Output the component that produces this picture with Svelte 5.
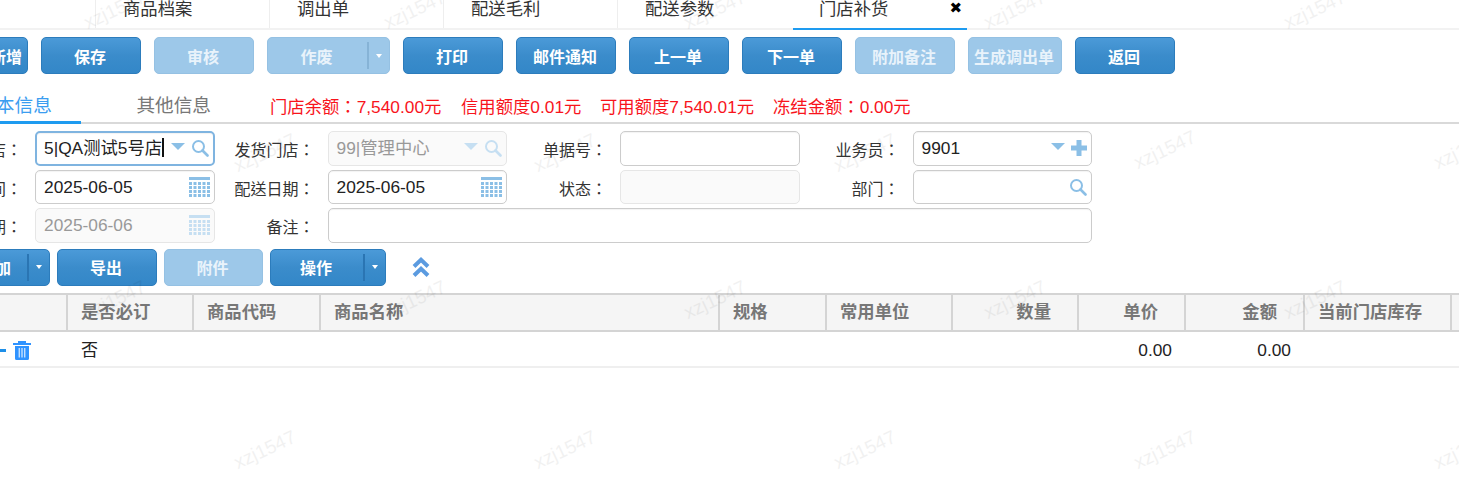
<script>
  const tabs = ['商品档案', '调出单', '配送毛利', '配送参数'];
  const actions = [
    { t: '新增', lead: true }, { t: '保存' }, { t: '审核', off: true }, { t: '作废', off: true, split: true },
    { t: '打印' }, { t: '邮件通知' }, { t: '上一单' }, { t: '下一单' },
    { t: '附加备注', off: true }, { t: '生成调出单', off: true, narrow: true }, { t: '返回' }
  ];
  const cols = [
    { t: '', w: 68 }, { t: '是否必订', w: 126 }, { t: '商品代码', w: 127 }, { t: '商品名称', w: 399 },
    { t: '规格', w: 107 }, { t: '常用单位', w: 126 }, { t: '数量', w: 126, r: true }, { t: '单价', w: 107, r: true },
    { t: '金额', w: 119, r: true }, { t: '当前门店库存', w: 147 }, { t: '', w: 7 }
  ];
  const template = cols.map((c) => c.w + 'px').join(' ');
  const marks = [
    [115, 10], [415, 10], [715, 10], [1015, 10], [1315, 10],
    [265, 153], [565, 153], [865, 153], [1165, 150], [1465, 150],
    [115, 300], [415, 300], [715, 300], [1015, 300], [1315, 300],
    [265, 450], [565, 450], [865, 450], [1165, 450], [1465, 450]
  ];
</script>

{#snippet search(cls = '')}
  <svg class="ico search {cls}" viewBox="0 0 18 18" width="18" height="18"><circle cx="7.5" cy="7.5" r="5.5" fill="none" stroke="currentColor" stroke-width="2"/><path d="M11.5 11.5 16.5 16.5" stroke="currentColor" stroke-width="2.6" stroke-linecap="round"/></svg>
{/snippet}
{#snippet caret()}
  <svg class="ico caret" viewBox="0 0 14 7" width="14" height="7"><path d="M0 0H14L7 7Z" fill="currentColor"/></svg>
{/snippet}
{#snippet calendar()}
  <svg class="ico" viewBox="0 0 21 20" width="21" height="20">
    <rect x="0" y="0" width="21" height="3" fill="currentColor"/>
    {#each [5, 9, 13, 17] as y}
      {#each [0, 4.5, 9, 13.5, 18] as x}
        <rect {x} {y} width="3" height="3" fill="currentColor"/>
      {/each}
    {/each}
  </svg>
{/snippet}

<div class="page">
  <nav class="tabs">
    {#each tabs as t}
      <div class="tab">{t}</div>
    {/each}
    <div class="tab active">门店补货<span class="close">✖</span></div>
  </nav>

  <div class="toolbar">
    {#each actions as a}
      <button class="btn" class:off={a.off} class:split={a.split} class:narrow={a.narrow} class:lead={a.lead}>
        <span class="lbl">{a.t}</span>
        {#if a.split}<span class="drop"><i></i></span>{/if}
      </button>
    {/each}
  </div>

  <div class="subtabs">
    <div class="sub on">基本信息</div>
    <div class="sub">其他信息</div>
    <div class="money">
      <span class="m1">门店余额：7,540.00元</span>
      <span class="m2">信用额度0.01元</span>
      <span class="m3">可用额度7,540.01元</span>
      <span>冻结金额：0.00元</span>
    </div>
  </div>

  <div class="form">
    <label class="lab">收货门店：</label>
    <div class="field focus"><span class="val">5|QA测试5号店<b class="cursor"></b></span>{@render caret()}{@render search()}</div>
    <label class="lab">发货门店：</label>
    <div class="field dis"><span class="val">99|管理中心</span>{@render caret()}{@render search()}</div>
    <label class="lab">单据号：</label>
    <div class="field"></div>
    <label class="lab">业务员：</label>
    <div class="field"><span class="val">9901</span>{@render caret()}
      <svg class="ico" viewBox="0 0 16 16" width="16" height="16"><path d="M8 0V16M0 8H16" stroke="currentColor" stroke-width="5"/></svg>
    </div>

    <label class="lab">单据时间：</label>
    <div class="field"><span class="val">2025-06-05</span>{@render calendar()}</div>
    <label class="lab">配送日期：</label>
    <div class="field"><span class="val">2025-06-05</span>{@render calendar()}</div>
    <label class="lab">状态：</label>
    <div class="field dis"></div>
    <label class="lab">部门：</label>
    <div class="field"><span class="val"></span>{@render search()}</div>

    <label class="lab">到货日期：</label>
    <div class="field dis"><span class="val">2025-06-06</span>{@render calendar()}</div>
    <label class="lab">备注：</label>
    <div class="field wide"></div>
  </div>

  <div class="toolbar second">
    <button class="btn split first"><span class="lbl">添加</span><span class="drop"><i></i></span></button>
    <button class="btn"><span class="lbl">导出</span></button>
    <button class="btn off attach"><span class="lbl">附件</span></button>
    <button class="btn split ops"><span class="lbl">操作</span><span class="drop"><i></i></span></button>
    <svg class="chev" viewBox="0 0 18 21" width="18" height="21"><path d="M2 9.500 9 2.800 16 9.500M2 18.500 9 11.800 16 18.500" fill="none" stroke="#5b9be0" stroke-width="4"/></svg>
  </div>

  <div class="grid head" style="grid-template-columns:{template}">
    {#each cols as c}
      <div class="th" class:r={c.r}>{c.t}</div>
    {/each}
  </div>
  <div class="grid row" style="grid-template-columns:{template}">
    <div class="td opsCell">
      <i class="minus"></i>
      <svg viewBox="0 0 18 20" width="18" height="20"><path d="M0 3H18V5H0ZM5 1H13V3H5Z" fill="#2f93ff"/><path fill-rule="evenodd" d="M2 6H16V18.5Q16 20 14.500 20H3.500Q2 20 2 18.500ZM5.700 8V17.500H6.700V8ZM8.500 8V17.500H9.500V8ZM11.300 8V17.500H12.300V8Z" fill="#2f93ff"/></svg>
    </div>
    <div class="td">否</div>
    <div class="td"></div><div class="td"></div><div class="td"></div><div class="td"></div><div class="td"></div>
    <div class="td num">0.00</div>
    <div class="td num">0.00</div>
    <div class="td"></div><div class="td"></div>
  </div>

  {#each marks as [x, y]}
    <span class="mark" style="left:{x}px;top:{y}px">xzj1547</span>
  {/each}
</div>

<style>
  :global(body) { margin: 0; background: #fff; }
  .page {
    position: relative;
    width: 1459px;
    height: 501px;
    overflow: hidden;
    background: #fff;
    font-family: "Liberation Sans", "Noto Sans CJK SC", sans-serif;
    font-size: 17.33px;
    color: #222;
  }
  .tabs {
    display: flex;
    height: 28px;
    padding-left: 95px;
    border-bottom: 2px solid #f2f2f2;
  }
  .tab {
    box-sizing: border-box;
    width: 174px;
    height: 28px;
    padding-left: 27px;
    line-height: 19px;
    font-size: 17.33px;
    color: #333;
    border-left: 1px solid #eee;
    position: relative;
  }
  .tab.active {
    border-left: 0;
    border-bottom: 2px solid #1e9bf0;
    height: 30px;
    margin-left: 2px;
    padding-left: 26px;
  }
  .close {
    position: absolute;
    right: 5px;
    top: 0;
    font-size: 15px;
    line-height: 17px;
    color: #000;
    font-family: "DejaVu Sans", sans-serif;
  }
  .toolbar {
    display: flex;
    gap: 13px;
    margin-left: -14px;
    margin-top: 7px;
  }
  .btn {
    box-sizing: border-box;
    display: flex;
    align-items: center;
    justify-content: center;
    width: 100px;
    height: 37px;
    padding: 0 2px 0 0;
    border: 1px solid #2c7cbc;
    border-radius: 5px;
    background: linear-gradient(#4b9ad8, #3b8ccb 50%, #3387c8);
    color: #fff;
    font: bold 16px "Liberation Sans", "Noto Sans CJK SC", sans-serif;
    flex: none;
  }
  .btn.lead { width: 42px; }
  .btn.off { border-color: #95c1e3; background: #9dc8e9; color: #e9f3fb; }
  .btn.narrow { width: 94px; }
  .btn.split { width: 123px; padding-right: 0; }
  .btn.split .lbl { flex: 1; text-align: center; padding-right: 2px; }
  .drop {
    box-sizing: border-box;
    width: 22px;
    height: 27px;
    display: flex;
    align-items: center;
    justify-content: center;
    border-left: 2px solid #2a75b3;
  }
  .off .drop { border-left-color: #86b3d6; }
  .drop i {
    width: 0;
    height: 0;
    border: 3.5px solid transparent;
    border-top: 4px solid #fff;
    border-bottom: 0;
  }
  .subtabs {
    display: flex;
    align-items: flex-end;
    height: 47px;
    margin-top: 1px;
    margin-left: -56px;
    border-bottom: 2px solid #d9d9d9;
    position: relative;
  }
  .sub {
    width: 130px;
    height: 33px;
    font-size: 18.67px;
    line-height: 33px;
    color: #777;
    text-align: right;
    box-sizing: border-box;
    flex: none;
  }
  .sub.on {
    width: 137px;
    color: #3b9df0;
    border-bottom: 3px solid #1e9bf0;
    margin-bottom: -2px;
    height: 35px;
    text-align: center;
    padding-left: 4px;
  }
  .money {
    display: flex;
    margin-left: 59px;
    color: #f8141c;
    font-family: "Liberation Sans", "Noto Sans CJK TC", sans-serif;
    font-size: 17.33px;
    line-height: 28px;
    height: 33px;
    padding-top: 4px;
    box-sizing: border-box;
    white-space: nowrap;
  }
  .m1 { width: 191px; }
  .m2 { width: 139px; }
  .m3 { width: 173px; }
  .form {
    display: grid;
    grid-template-columns: 112.5px 179.5px 113px 179.5px 113px 179.5px 113px 179.5px;
    grid-auto-rows: 34.5px;
    row-gap: 4px;
    margin: 7px 0 0 -77.5px;
    width: 1200px;
  }
  .lab {
    align-self: center;
    text-align: right;
    padding-right: 13px;
    font-family: "Liberation Sans", "Noto Sans CJK TC", sans-serif;
    font-size: 16px;
    line-height: 20px;
    color: #333;
    white-space: nowrap;
    padding-top: 6px;
  }
  .field {
    box-sizing: border-box;
    display: flex;
    align-items: center;
    gap: 6px;
    padding: 0 4px 0 8px;
    border: 1px solid #ccc;
    border-radius: 5px;
    color: #8bbfe6;
    background: #fff;
    box-shadow: inset 0 1px 1px #0000000d;
    overflow: hidden;
  }
  .field.focus { border: 2px solid #7fb4e0; padding-left: 7px; }
  .field.dis { border-color: #e6e6e6; background: #fafafa; color: #c6dff2; box-shadow: none; }
  .field.dis .val { color: #999; }
  .field.wide { grid-column: span 5; }
  .val { flex: 1; color: #222; white-space: nowrap; font-size: 17.33px; line-height: 22px; }
  .cursor { display: inline-block; width: 2px; height: 19px; background: #111; vertical-align: -3px; }
  .ico { flex: none; }
  .caret { color: #8bbfe6; margin-bottom: 4px; }
  .field.dis .caret { color: #c6dff2; }
  .toolbar.second { gap: 7px; margin-top: 6px; margin-left: -36px; align-items: center; }
  .btn.first { width: 86px; }
  .btn.attach { width: 99px; }
  .btn.ops { width: 116px; }
  .chev { margin-left: 19px; }
  .grid { display: grid; }
  .head {
    margin-top: 7px;
    height: 39px;
    box-sizing: border-box;
    background: #f5f5f5;
    border-top: 2px solid #d4d4d4;
    border-bottom: 2px solid #d4d4d4;
  }
  .th {
    box-sizing: border-box;
    padding: 0 13px;
    border-right: 2px solid #d4d4d4;
    font-weight: bold;
    font-size: 17.33px;
    line-height: 35px;
    color: #777;
    white-space: nowrap;
    overflow: hidden;
  }
  .th.r { text-align: right; padding-right: 26px; }
  .th:last-child { border-right: 0; padding: 0; }
  .row { height: 36px; box-sizing: border-box; border-bottom: 2px solid #efefef; }
  .td { padding: 1px 13px 0; line-height: 36px; font-size: 17px; color: #222; box-sizing: border-box; white-space: nowrap; }
  .num { text-align: right; font-size: 17.33px; padding: 0 14px 0 0; }
  .opsCell { position: relative; padding: 0; display: flex; align-items: center; justify-content: flex-start; }
  .opsCell svg { margin-left: 13px; }
  .minus { position: absolute; left: 0; top: 17px; width: 6px; height: 3px; background: #1e8fe8; }
  .mark {
    position: absolute;
    transform: translate(-50%, -50%) rotate(-25deg);
    font-size: 19px;
    color: #000;
    opacity: 0.05;
    pointer-events: none;
    white-space: nowrap;
  }
</style>
